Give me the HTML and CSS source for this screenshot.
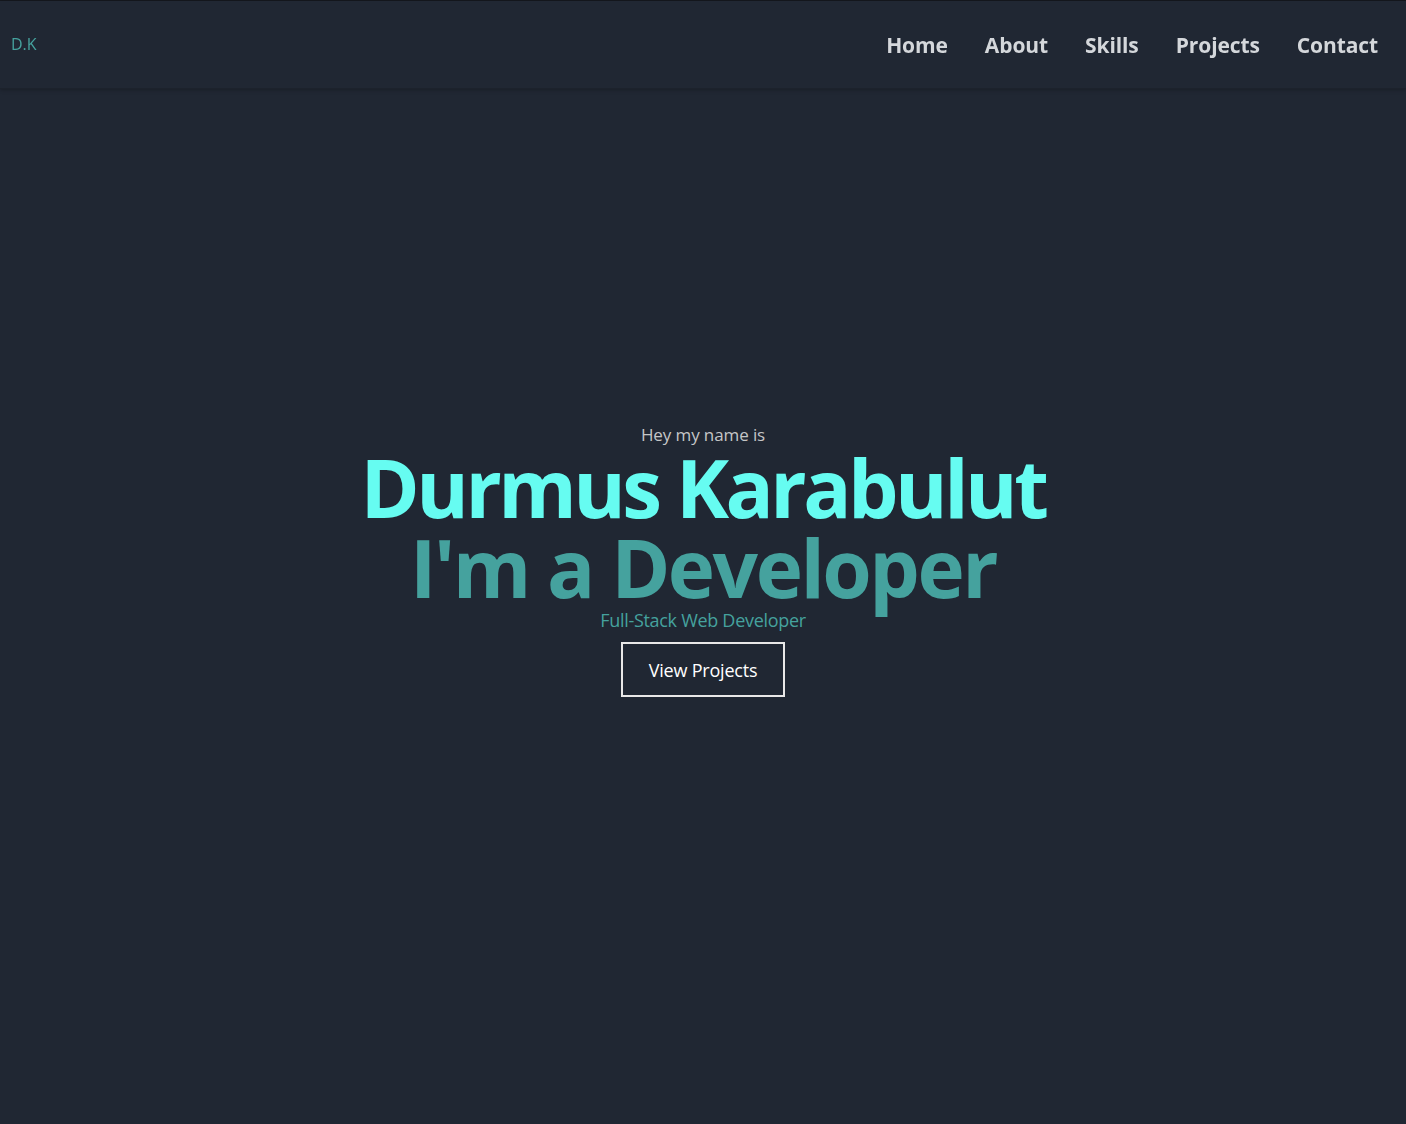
FILE: index.html
```html
<!DOCTYPE html>
<html lang="en">
<head>
<meta charset="utf-8">
<title>Durmus Karabulut</title>
<link rel="stylesheet" href="styles.css">
</head>
<body>
<header class="navbar">
  <a class="logo" href="#">D.K</a>
  <nav class="links">
    <a href="#">Home</a>
    <a href="#">About</a>
    <a href="#">Skills</a>
    <a href="#">Projects</a>
    <a href="#">Contact</a>
  </nav>
</header>
<main class="hero">
  <p class="intro">Hey my name is</p>
  <h1 class="name">Durmus Karabulut</h1>
  <h2 class="role">I'm a Developer</h2>
  <p class="sub">Full-Stack Web Developer</p>
  <a class="btn" href="#">View Projects</a>
</main>
</body>
</html>
```

FILE: styles.css
```css
* { box-sizing: border-box; }
html, body { margin: 0; padding: 0; }
body {
  background: #202733;
  font-family: "Open Sans", "Noto Sans", sans-serif;
  border-top: 1px solid #15181e;
  min-height: 100vh;
}
a { text-decoration: none; }
.navbar {
  position: fixed;
  top: 1px; left: 0; right: 0;
  height: 88px;
  display: flex;
  align-items: center;
  justify-content: space-between;
  padding: 0 28px 0 11px;
  background: #202733;
  box-shadow: 0 1px 4px rgba(0,0,0,0.25);
  border-bottom: 1px solid #1c222c;
  z-index: 10;
}
.logo {
  color: #45a29e;
  font-size: 16px;
  margin-top: -1px;
}
.links {
  display: flex;
  gap: 37px;
}
.links a {
  color: #d4d7db;
  font-weight: 700;
  font-size: 21px;
  letter-spacing: -0.1px;
  margin-top: 1px;
}
.hero {
  height: calc(100vh - 1px);
  padding-bottom: 3px;
  display: flex;
  flex-direction: column;
  align-items: center;
  justify-content: center;
  text-align: center;
}
.intro {
  margin: 0 0 2px;
  color: #c5c6c7;
  font-size: 17px;
  line-height: 20px;
  letter-spacing: -0.1px;
}
.name {
  margin: 0;
  color: #66fcf1;
  font-size: 80px;
  font-weight: 700;
  line-height: 80px;
  letter-spacing: -3.5px;
}
.role {
  margin: 0;
  color: #45a29e;
  font-size: 80px;
  font-weight: 700;
  line-height: 80px;
  letter-spacing: -2.5px;
}
.sub {
  margin: 2px 0 0;
  color: #45a29e;
  font-size: 18px;
  line-height: 22px;
  letter-spacing: -0.3px;
}
.btn {
  margin-top: 11px;
  width: 164px;
  height: 55px;
  display: flex;
  align-items: center;
  justify-content: center;
  border: 2px solid #e8e8e8;
  color: #ffffff;
  font-size: 18px;
  letter-spacing: -0.2px;
}
```
